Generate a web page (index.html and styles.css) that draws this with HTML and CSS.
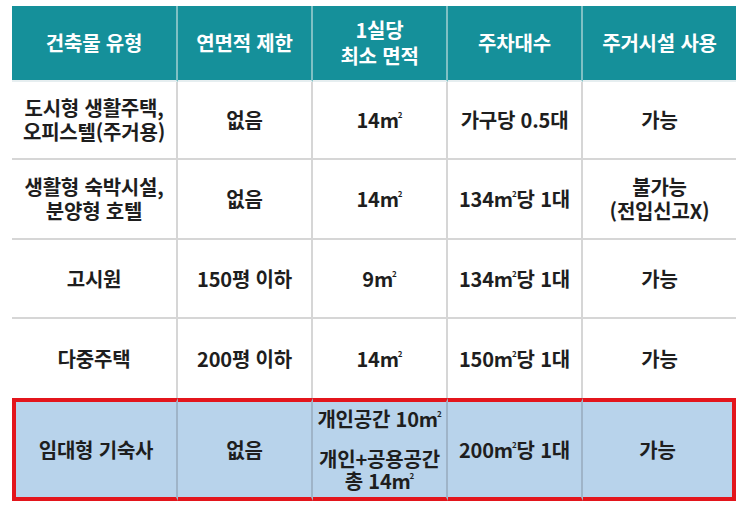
FILE: index.html
```html
<!DOCTYPE html>
<html lang="ko">
<head>
<meta charset="utf-8">
<link rel="stylesheet" href="styles.css">
</head>
<body>
<table class="tbl">
  <colgroup>
    <col class="c1"><col class="c2"><col class="c3"><col class="c4"><col class="c5">
  </colgroup>
  <thead>
    <tr class="head">
      <th>건축물 유형</th>
      <th>연면적 제한</th>
      <th><div class="two">1실당<br>최소 면적</div></th>
      <th>주차대수</th>
      <th class="last">주거시설 사용</th>
    </tr>
  </thead>
  <tbody>
    <tr class="r1">
      <td><div class="two">도시형 생활주택,<br>오피스텔(주거용)</div></td>
      <td>없음</td>
      <td>14m<sup>2</sup></td>
      <td>가구당 0.5대</td>
      <td class="last">가능</td>
    </tr>
    <tr class="r2">
      <td><div class="two">생활형 숙박시설,<br>분양형 호텔</div></td>
      <td>없음</td>
      <td>14m<sup>2</sup></td>
      <td>134m<sup>2</sup>당 1대</td>
      <td class="last"><div class="two">불가능<br>(전입신고X)</div></td>
    </tr>
    <tr class="r3">
      <td>고시원</td>
      <td>150평 이하</td>
      <td>9m<sup>2</sup></td>
      <td>134m<sup>2</sup>당 1대</td>
      <td class="last">가능</td>
    </tr>
    <tr class="r4">
      <td>다중주택</td>
      <td>200평 이하</td>
      <td>14m<sup>2</sup></td>
      <td>150m<sup>2</sup>당 1대</td>
      <td class="last">가능</td>
    </tr>
    <tr class="hl">
      <td class="first">임대형 기숙사</td>
      <td>없음</td>
      <td>
        <div class="area-a">개인공간 10m<sup>2</sup></div>
        <div class="two">개인+공용공간<br>총 14m<sup>2</sup></div>
      </td>
      <td>200m<sup>2</sup>당 1대</td>
      <td class="last">가능</td>
    </tr>
  </tbody>
</table>
</body>
</html>
```

FILE: styles.css
```css
html, body {
  margin: 0;
  padding: 0;
  background: #ffffff;
}

body {
  padding: 6px 0 0 12px;
  font-family: "Noto Sans CJK KR", "Noto Sans", sans-serif;
}

.tbl {
  border-collapse: separate;
  border-spacing: 0;
  table-layout: fixed;
  width: 724px;
}

.c1 { width: 166px; }
.c2 { width: 135px; }
.c3 { width: 135px; }
.c4 { width: 135px; }
.c5 { width: 153px; }

th, td {
  padding: 0;
  text-align: center;
  vertical-align: middle;
  font-size: 20px;
  letter-spacing: -0.2px;
  line-height: 24px;
  color: #1e1e1e;
  font-weight: 700;
}

th {
  background: #15909a;
  color: #ffffff;
  border-right: 2px solid #7fc0c4;
  border-bottom: 2px solid #e6eef0;
}

th.last { border-right: none; }

.head { height: 76px; }
.head .two { line-height: 26px; }

td {
  border-right: 2px solid #d6d6d6;
  border-bottom: 2px solid #d6d6d6;
}

td.last { border-right: none; }

.r1 { height: 78px; }
.r2 { height: 80px; }
.r3 { height: 79px; }
.r4 { height: 79px; }
.r4 td { border-bottom: none; }

.hl td {
  background: #b8d3eb;
  border-top: 4px solid #e3151c;
  border-bottom: 4px solid #e3151c;
  border-right: 2px solid #9fb4c8;
  height: 95px;
}

.hl td.first { border-left: 4px solid #e3151c; }
.hl td.last { border-right: 4px solid #e3151c; }

.hl .two { line-height: 22px; }
.area-a { margin-bottom: 17px; }

sup {
  font-size: 8px;
  line-height: 0;
  vertical-align: 10px;
  letter-spacing: 0;
  margin-left: -1px;
}
```
